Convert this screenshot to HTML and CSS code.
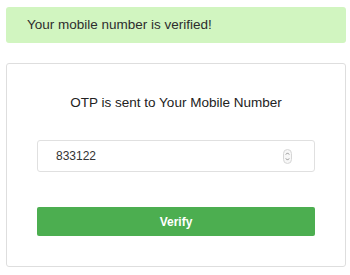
FILE: index.html
```html
<!DOCTYPE html>
<html lang="en">
  <head>
    <title>Verify OTP</title>
    <link rel="stylesheet" href="styles.css">
  </head>

  <body>
    <!-- success message -->
    <div class="alert">Your mobile number is verified!</div>

    <!-- otp card -->
    <div class="card">
      <h3>OTP is sent to Your Mobile Number</h3>
      <form id="form">
        <div class="field">
          <input type="text" id="otp" value="833122" />
          <svg class="spin" width="9" height="15" viewBox="0 0 9 15">
            <rect x="0.5" y="0.5" width="8" height="14" rx="4" fill="#f7f7f7" stroke="#d6d6d6" />
            <path d="M2.8 5.6 L4.5 3.9 L6.2 5.6" fill="none" stroke="#888" stroke-width="0.9" />
            <path d="M2.8 9.4 L4.5 11.1 L6.2 9.4" fill="none" stroke="#888" stroke-width="0.9" />
          </svg>
        </div>
        <button type="submit">Verify</button>
      </form>
    </div>
  </body>
</html>
```

FILE: styles.css
```css
body {
  margin: 7px 4px 0 6px;
  font-family: "Liberation Sans", Arial, sans-serif;
  color: #333;
}

.alert {
  height: 36px;
  line-height: 36px;
  padding-left: 21px;
  font-size: 13.5px;
  color: #2d2d2d;
  background-color: #d1f5c0;
  border-radius: 3px;
}

.card {
  margin-top: 20px;
  height: 202px;
  padding: 0 30px;
  border: 1px solid #dedede;
  border-radius: 3px;
}

.card h3 {
  margin: 29px 0 0;
  font-size: 13.5px;
  font-weight: normal;
  line-height: 20px;
  text-align: center;
  color: #222;
}

.card form {
  display: flex;
  flex-direction: column;
  margin-top: 27px;
  gap: 35px;
}

.field {
  position: relative;
}

.field input {
  box-sizing: border-box;
  width: 100%;
  height: 32px;
  padding: 0 0 0 18px;
  font-family: "Liberation Sans", Arial, sans-serif;
  font-size: 12px;
  color: #333;
  border: 1px solid #e0e0e0;
  border-radius: 3px;
  outline: none;
}

.spin {
  position: absolute;
  right: 23px;
  top: 9px;
}

.card button {
  height: 29px;
  border: none;
  border-radius: 2px;
  font-family: "Liberation Sans", Arial, sans-serif;
  font-size: 12px;
  font-weight: bold;
  color: white;
  background-color: #4cae50;
  cursor: pointer;
}
```
